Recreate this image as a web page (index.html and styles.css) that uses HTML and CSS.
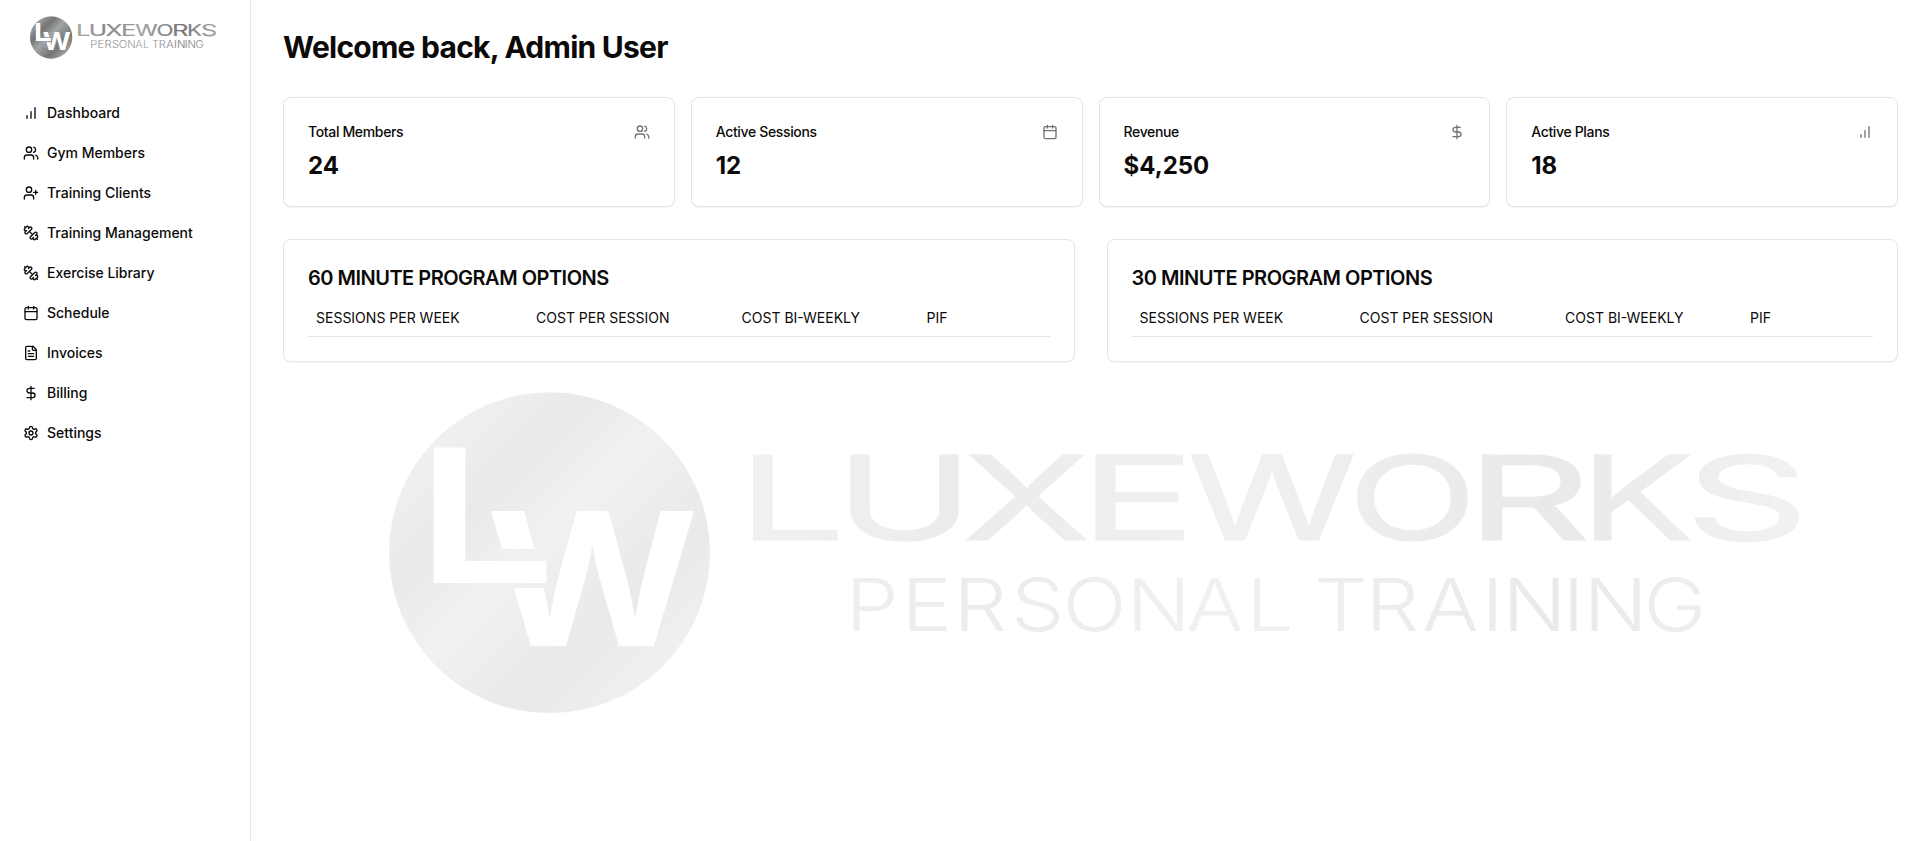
FILE: index.html
```html
<!DOCTYPE html>
<html lang="en">
<head>
<meta charset="utf-8">
<title>Luxeworks Personal Training</title>
<link rel="stylesheet" href="styles.css">
</head>
<body>
<svg class="defs" width="0" height="0" aria-hidden="true">
  <defs>
    <linearGradient id="disc" gradientUnits="userSpaceOnUse" x1="389" y1="392" x2="710" y2="713">
      <stop offset=".14" stop-color="#a2a2a3"/>
      <stop offset=".31" stop-color="#747475"/>
      <stop offset=".465" stop-color="#a3a6a6"/>
      <stop offset=".69" stop-color="#747475"/>
      <stop offset=".86" stop-color="#a0a0a1"/>
    </linearGradient>
    <linearGradient id="word" gradientUnits="userSpaceOnUse" x1="754" y1="0" x2="1799" y2="0">
      <stop offset="0" stop-color="#a3a6a6"/>
      <stop offset=".2" stop-color="#848485"/>
      <stop offset=".46" stop-color="#a3a3a4"/>
      <stop offset=".76" stop-color="#747475"/>
      <stop offset="1" stop-color="#a6a9a9"/>
    </linearGradient>
    <linearGradient id="tag" href="#word" x1="656" x2="1564"/>
    <symbol id="logo" viewBox="389 392 1410 322">
      <circle cx="549.5" cy="552.7" r="160.5" fill="url(#disc)"/>
      <text class="mono" y="646"><tspan x="486" textLength="213" lengthAdjust="spacingAndGlyphs">W</tspan></text>
      <path d="M463 549h83v39h-83z" fill="url(#disc)"/>
      <text class="mono mono-l" y="582.7"><tspan x="419" textLength="134" lengthAdjust="spacingAndGlyphs">L</tspan></text>
      <text class="brand" y="540" fill="url(#word)" stroke="url(#word)"><tspan x="737" textLength="109" lengthAdjust="spacingAndGlyphs">L</tspan><tspan x="835" textLength="139" lengthAdjust="spacingAndGlyphs">U</tspan><tspan x="962" textLength="129" lengthAdjust="spacingAndGlyphs">X</tspan><tspan x="1079.5" textLength="116" lengthAdjust="spacingAndGlyphs">E</tspan><tspan x="1187" textLength="170" lengthAdjust="spacingAndGlyphs">W</tspan><tspan x="1348" textLength="129" lengthAdjust="spacingAndGlyphs">O</tspan><tspan x="1466" textLength="125" lengthAdjust="spacingAndGlyphs">R</tspan><tspan x="1580" textLength="114" lengthAdjust="spacingAndGlyphs">K</tspan><tspan x="1685" textLength="124" lengthAdjust="spacingAndGlyphs">S</tspan></text>
      <text class="tagline" transform="scale(1.15 1)" y="631" fill="url(#tag)" x="735.2 783.9 829.1 879.1 923.9 979.6 1031.7 1083.5 1121.7 1142.6 1187.4 1236.5 1288.3 1306.5 1358.7 1377 1429.1">PERSONAL TRAINING</text>
    </symbol>
    <symbol id="chart" viewBox="0 0 24 24"><path d="M6 20v-4M12 20V10M18 20V4"/></symbol>
    <symbol id="users" viewBox="0 0 24 24"><path d="M16 21v-2a4 4 0 0 0-4-4H6a4 4 0 0 0-4 4v2"/><circle cx="9" cy="7" r="4"/><path d="M22 21v-2a4 4 0 0 0-3-3.87M16 3.13a4 4 0 0 1 0 7.75"/></symbol>
    <symbol id="userplus" viewBox="0 0 24 24"><path d="M16 21v-2a4 4 0 0 0-4-4H6a4 4 0 0 0-4 4v2"/><circle cx="9" cy="7" r="4"/><path d="M19 8v6M22 11h-6"/></symbol>
    <symbol id="dumbbell" viewBox="0 0 24 24"><path d="M14.4 14.4 9.6 9.6M18.657 21.485a2 2 0 1 1-2.829-2.828l-1.767 1.768a2 2 0 1 1-2.829-2.829l6.364-6.364a2 2 0 1 1 2.829 2.829l-1.768 1.767a2 2 0 1 1 2.828 2.829zM21.5 21.5l-1.4-1.4M3.9 3.9 2.5 2.5M6.404 12.768a2 2 0 1 1-2.829-2.829l1.768-1.767a2 2 0 1 1-2.828-2.829l2.828-2.828a2 2 0 1 1 2.829 2.828l1.767-1.768a2 2 0 1 1 2.829 2.829z"/></symbol>
    <symbol id="calendar" viewBox="0 0 24 24"><path d="M8 2v4M16 2v4M3 10h18"/><rect x="3" y="4" width="18" height="18" rx="2"/></symbol>
    <symbol id="file" viewBox="0 0 24 24"><path d="M15 2H6a2 2 0 0 0-2 2v16a2 2 0 0 0 2 2h12a2 2 0 0 0 2-2V7Z"/><path d="M14 2v4a2 2 0 0 0 2 2h4M10 9H8M16 13H8M16 17H8"/></symbol>
    <symbol id="dollar" viewBox="0 0 24 24"><path d="M12 2v20M17 5H9.5a3.5 3.5 0 0 0 0 7h5a3.5 3.5 0 0 1 0 7H6"/></symbol>
    <symbol id="gear" viewBox="0 0 24 24"><path d="M12.22 2h-.44a2 2 0 0 0-2 2v.18a2 2 0 0 1-1 1.73l-.43.25a2 2 0 0 1-2 0l-.15-.08a2 2 0 0 0-2.73.73l-.22.38a2 2 0 0 0 .73 2.73l.15.1a2 2 0 0 1 1 1.72v.51a2 2 0 0 1-1 1.74l-.15.09a2 2 0 0 0-.73 2.73l.22.38a2 2 0 0 0 2.73.73l.15-.08a2 2 0 0 1 2 0l.43.25a2 2 0 0 1 1 1.73V20a2 2 0 0 0 2 2h.44a2 2 0 0 0 2-2v-.18a2 2 0 0 1 1-1.73l.43-.25a2 2 0 0 1 2 0l.15.08a2 2 0 0 0 2.73-.73l.22-.39a2 2 0 0 0-.73-2.73l-.15-.08a2 2 0 0 1-1-1.74v-.5a2 2 0 0 1 1-1.74l.15-.09a2 2 0 0 0 .73-2.73l-.22-.38a2 2 0 0 0-2.73-.73l-.15.08a2 2 0 0 1-2 0l-.43-.25a2 2 0 0 1-1-1.73V4a2 2 0 0 0-2-2z"/><circle cx="12" cy="12" r="3"/></symbol>
  </defs>
</svg>
<div class="app">
  <aside class="sidebar">
    <svg class="logo"><use href="#logo"/></svg>
    <nav class="nav">
      <a class="nav-item"><svg class="icon"><use href="#chart"/></svg>Dashboard</a>
      <a class="nav-item"><svg class="icon"><use href="#users"/></svg>Gym Members</a>
      <a class="nav-item"><svg class="icon"><use href="#userplus"/></svg>Training Clients</a>
      <a class="nav-item"><svg class="icon"><use href="#dumbbell"/></svg>Training Management</a>
      <a class="nav-item"><svg class="icon"><use href="#dumbbell"/></svg>Exercise Library</a>
      <a class="nav-item"><svg class="icon"><use href="#calendar"/></svg>Schedule</a>
      <a class="nav-item"><svg class="icon"><use href="#file"/></svg>Invoices</a>
      <a class="nav-item"><svg class="icon"><use href="#dollar"/></svg>Billing</a>
      <a class="nav-item"><svg class="icon"><use href="#gear"/></svg>Settings</a>
    </nav>
  </aside>
  <main class="main">
    <svg class="watermark"><use href="#logo"/></svg>
    <h1 class="title">Welcome back, Admin User</h1>
    <section class="stats">
      <div class="card"><div class="stat-head">Total Members<svg class="icon muted"><use href="#users"/></svg></div><div class="stat-value">24</div></div>
      <div class="card"><div class="stat-head">Active Sessions<svg class="icon muted"><use href="#calendar"/></svg></div><div class="stat-value">12</div></div>
      <div class="card"><div class="stat-head">Revenue<svg class="icon muted"><use href="#dollar"/></svg></div><div class="stat-value">$4,250</div></div>
      <div class="card"><div class="stat-head">Active Plans<svg class="icon muted"><use href="#chart"/></svg></div><div class="stat-value">18</div></div>
    </section>
    <section class="programs">
      <div class="card program">
        <h2 class="program-title">60 MINUTE PROGRAM OPTIONS</h2>
        <div class="table-head"><span>SESSIONS PER WEEK</span><span>COST PER SESSION</span><span>COST BI-WEEKLY</span><span>PIF</span></div>
      </div>
      <div class="card program">
        <h2 class="program-title">30 MINUTE PROGRAM OPTIONS</h2>
        <div class="table-head"><span>SESSIONS PER WEEK</span><span>COST PER SESSION</span><span>COST BI-WEEKLY</span><span>PIF</span></div>
      </div>
    </section>
  </main>
</div>
</body>
</html>
```
FILE: styles.css
```css
* { box-sizing: border-box; }
body {
  margin: 0;
  background: #fff;
  color: #0c0a09;
  font-family: Inter, "Liberation Sans", sans-serif;
  font-size: 14px;
  line-height: 20px;
}
.defs { position: absolute; }
.app { display: flex; height: 841px; overflow: hidden; }
.sidebar {
  width: 251px;
  flex: none;
  border-right: 1px solid #e5e5e5;
  padding: 16px 16px 0;
}
.logo { display: block; width: 186px; height: 43px; margin-left: 14px; }
.nav { display: flex; flex-direction: column; gap: 4px; margin-top: 36px; }
.nav-item {
  display: flex;
  align-items: center;
  gap: 8px;
  height: 36px;
  padding: 0 7px;
  font-weight: 500;
}
.icon {
  width: 16px;
  height: 16px;
  flex: none;
  fill: none;
  stroke: currentColor;
  stroke-width: 2;
  stroke-linecap: round;
  stroke-linejoin: round;
}
.muted { color: #78716c; }
.main { position: relative; flex: 1; padding: 29px 20px 0 32px; }
.watermark {
  position: absolute;
  left: 138px;
  top: 392px;
  width: 1410px;
  height: 322px;
  opacity: .15;
}
.title { margin: 0; font-size: 30px; line-height: 36px; font-weight: 700; letter-spacing: -.75px; }
.stats { display: grid; grid-template-columns: repeat(4, 1fr); gap: 16px; margin-top: 32px; }
.card {
  background: #fff;
  border: 1px solid #e5e5e5;
  border-radius: 8px;
  box-shadow: 0 1px 2px rgba(0, 0, 0, .05);
  padding: 24px;
}
.stats .card { height: 110px; }
.stat-head {
  display: flex;
  align-items: center;
  justify-content: space-between;
  font-weight: 500;
  letter-spacing: -.35px;
}
.stat-value { margin-top: 8px; font-size: 24px; line-height: 32px; font-weight: 700; }
.programs { display: grid; grid-template-columns: 1fr 1fr; gap: 32px; margin-top: 32px; }
.program { height: 123px; }
.program-title { margin: 0; font-size: 20px; line-height: 28px; font-weight: 600; letter-spacing: -.5px; }
.table-head {
  display: grid;
  grid-template-columns: 220fr 205.6fr 185fr 131fr;
  border-bottom: 1px solid #e5e5e5;
  margin-top: 16px;
  padding: 0 0 8px;
}
.table-head span { padding-left: 8px; }
.mono { font: 700 185px Inter, sans-serif; fill: #fff; stroke: none; }
.mono-l { font: 700 196px "Liberation Sans", Arial, sans-serif; }
.brand { font: 400 117px Inter, sans-serif; stroke-width: 1.2; }
.tagline { font: 350 73.5px Inter, sans-serif; stroke: none; }
```
